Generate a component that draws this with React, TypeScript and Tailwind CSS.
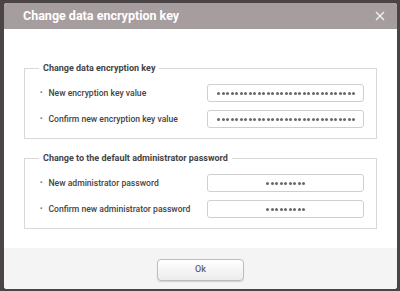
const font = { fontFamily: "Roboto, 'Liberation Sans', sans-serif" };

function Dots({ n }: { n: number }) {
  return (
    <span className="flex gap-[1.5px]">
      {Array.from({ length: n }).map((_, i) => (
        <span key={i} className="w-[3px] h-[3px] rounded-full bg-[#6a6a6a]" />
      ))}
    </span>
  );
}

function Row({ label, dots, center }: { label: string; dots: number; center?: boolean }) {
  return (
    <div className="flex items-center h-[18px]">
      <div className="flex items-center pl-[15px] w-[182px] text-[8.6px] font-medium text-[#444]">
        <span className="text-[7px] text-[#666] mr-[6px]">•</span>
        <span>{label}</span>
      </div>
      <div
        className={
          "w-[157px] h-[18px] border border-[#cfcfcf] rounded-[3px] bg-white flex items-center overflow-hidden " +
          (center ? "justify-center" : "pl-[9px]")
        }
      >
        <Dots n={dots} />
      </div>
    </div>
  );
}

function Group({ title, children }: { title: string; children: React.ReactNode }) {
  return (
    <fieldset className="border border-[#d8d8d8] pb-[10px] pt-[9px] flex flex-col gap-[8px]">
      <legend className="ml-[14px] px-[4px] text-[9px] font-bold text-[#444] leading-[14px]">{title}</legend>
      {children}
    </fieldset>
  );
}

export default function App() {
  return (
    <div className="w-[400px] h-[291px] bg-[#4b4447] pt-[3px] pl-[4px] pr-[3px] pb-[2px]" style={font}>
      <div className="w-[393px] h-[286px] bg-white rounded-[3px] overflow-hidden flex flex-col">
        <div className="h-[26px] bg-[#a69d9f] flex items-center justify-between pl-[19px] pr-[12px]">
          <span className="text-white text-[12.5px] font-bold">Change data encryption key</span>
          <svg width="10" height="10" viewBox="0 0 10 10" className="mt-[-1px]">
            <path d="M1 1 L9 9 M9 1 L1 9" stroke="#f2f2f2" strokeWidth="1.4" />
          </svg>
        </div>
        <div className="flex-1 px-[20px] pt-[32px] flex flex-col gap-[12px]">
          <Group title="Change data encryption key">
            <Row label="New encryption key value" dots={31} />
            <Row label="Confirm new encryption key value" dots={31} />
          </Group>
          <Group title="Change to the default administrator password">
            <Row label="New administrator password" dots={9} center />
            <Row label="Confirm new administrator password" dots={9} center />
          </Group>
        </div>
        <div className="h-[41px] bg-[#f4f4f4] flex items-center justify-center pt-[3px]">
          <button className="w-[87px] h-[22px] rounded-[4px] border border-[#bdbdbd] bg-gradient-to-b from-white to-[#ececec] shadow-[0_1px_1px_rgba(0,0,0,0.15)] text-[9px] font-medium text-[#666]">
            Ok
          </button>
        </div>
      </div>
    </div>
  );
}
